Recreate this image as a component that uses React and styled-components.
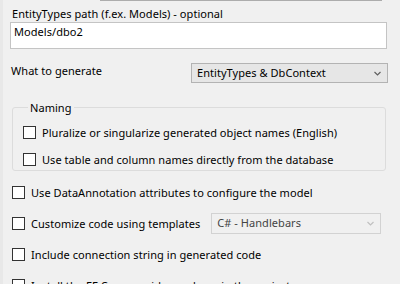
import styled, { createGlobalStyle } from "styled-components";

const Global = createGlobalStyle`
  html, body {
    margin: 0;
    padding: 0;
    background: #f0f0f0;
  }
  body {
    font-family: "Noto Sans", "Liberation Sans", sans-serif;
    font-size: 11px;
    letter-spacing: 0.05px;
    color: #000;
  }
`;

const Page = styled.div`
  width: 400px;
  height: 284px;
  overflow: hidden;
  background: #f0f0f0;
  box-shadow: inset 3px 0 0 #e8e8e8;
  display: flex;
  flex-direction: column;
  & > * {
    flex-shrink: 0;
  }
`;

const TopEdge = styled.div`
  margin-left: 100px;
  width: 282px;
  height: 1px;
  background: #acacac;
`;

const Label = styled.div`
  line-height: 15px;
  margin: ${(p) => p.$top || 0}px 0 0 ${(p) => p.$left || 0}px;
  white-space: nowrap;
`;

const TextBox = styled.div`
  margin: 1px 0 0 10px;
  width: 377px;
  height: 27px;
  box-sizing: border-box;
  border: 1px solid #c4c4c4;
  background: #fff;
  padding: 1px 3px 0;
  line-height: 15px;
`;

const Row = styled.div`
  display: flex;
  align-items: ${(p) => p.$align || "center"};
  margin-top: ${(p) => p.$top || 0}px;
  padding-left: ${(p) => p.$left || 0}px;
  height: ${(p) => p.$height || 15}px;
  flex-shrink: 0;
  white-space: nowrap;
  line-height: 15px;
`;

const Combo = styled.div`
  margin-left: ${(p) => p.$left}px;
  width: ${(p) => p.$width}px;
  height: ${(p) => p.$height}px;
  flex-shrink: 0;
  box-sizing: border-box;
  border: 1px solid ${(p) => (p.$disabled ? "#d2d2d2" : "#b3b3b3")};
  background: ${(p) => (p.$disabled ? "#f0f0f0" : "#e6e6e6")};
  color: ${(p) => (p.$disabled ? "#444" : "#000")};
  display: flex;
  align-items: center;
  padding: 0 6px 0 5px;
  line-height: 18px;
`;

const ComboText = styled.span`
  flex: 1;
`;

const Chevron = ({ color }) => (
  <svg width="7" height="5" viewBox="0 0 7 5">
    <path d="M0.5 1 L3.5 4 L6.5 1" fill="none" stroke={color} strokeWidth="1.2" />
  </svg>
);

const Group = styled.fieldset`
  margin: 17px 0 0 12px;
  width: 374px;
  box-sizing: border-box;
  border: 1px solid #dcdcdc;
  border-radius: 3px;
  padding: 10px 0 3px 10px;
  display: flex;
  flex-direction: column;
  gap: 12px;
`;

const Legend = styled.legend`
  margin-left: 5px;
  padding: 0 2px;
  line-height: 15px;
`;

const Box = styled.span`
  flex: none;
  width: 13px;
  height: 13px;
  box-sizing: border-box;
  border: 1px solid #333;
  background: #fff;
  margin-right: 6px;
`;

const Options = styled.div`
  margin-top: 10px;
  display: flex;
  flex-direction: column;
  gap: 9px;
`;

function Check({ children, left, height }) {
  return (
    <Row $left={left} $height={height}>
      <Box />
      {children}
    </Row>
  );
}

export default function App() {
  return (
    <Page>
      <Global />
      <TopEdge />
      <Label $top={5} $left={12}>EntityTypes path (f.ex. Models) - optional</Label>
      <TextBox>Models/dbo2</TextBox>

      <Row $top={14} $left={11} $height={20} $align="flex-start">
        <span>What to generate</span>
        <Combo $left={89} $width={197} $height={20}>
          <ComboText>EntityTypes &amp; DbContext</ComboText>
          <Chevron color="#606060" />
        </Combo>
      </Row>

      <Group>
        <Legend>Naming</Legend>
        <Check left={0}>Pluralize or singularize generated object names (English)</Check>
        <Check left={0}>Use table and column names directly from the database</Check>
      </Group>

      <Options>
        <Check left={12} height={22}>Use DataAnnotation attributes to configure the model</Check>
        <Row $left={12} $height={22}>
          <Box />
          Customize code using templates
          <Combo $left={11} $width={170} $height={21} $disabled>
            <ComboText>C# - Handlebars</ComboText>
            <Chevron color="#c0c0c0" />
          </Combo>
        </Row>
        <Check left={12} height={22}>Include connection string in generated code</Check>
        <Check left={12} height={22}>Install the EF Core provider package in the project</Check>
      </Options>
    </Page>
  );
}
